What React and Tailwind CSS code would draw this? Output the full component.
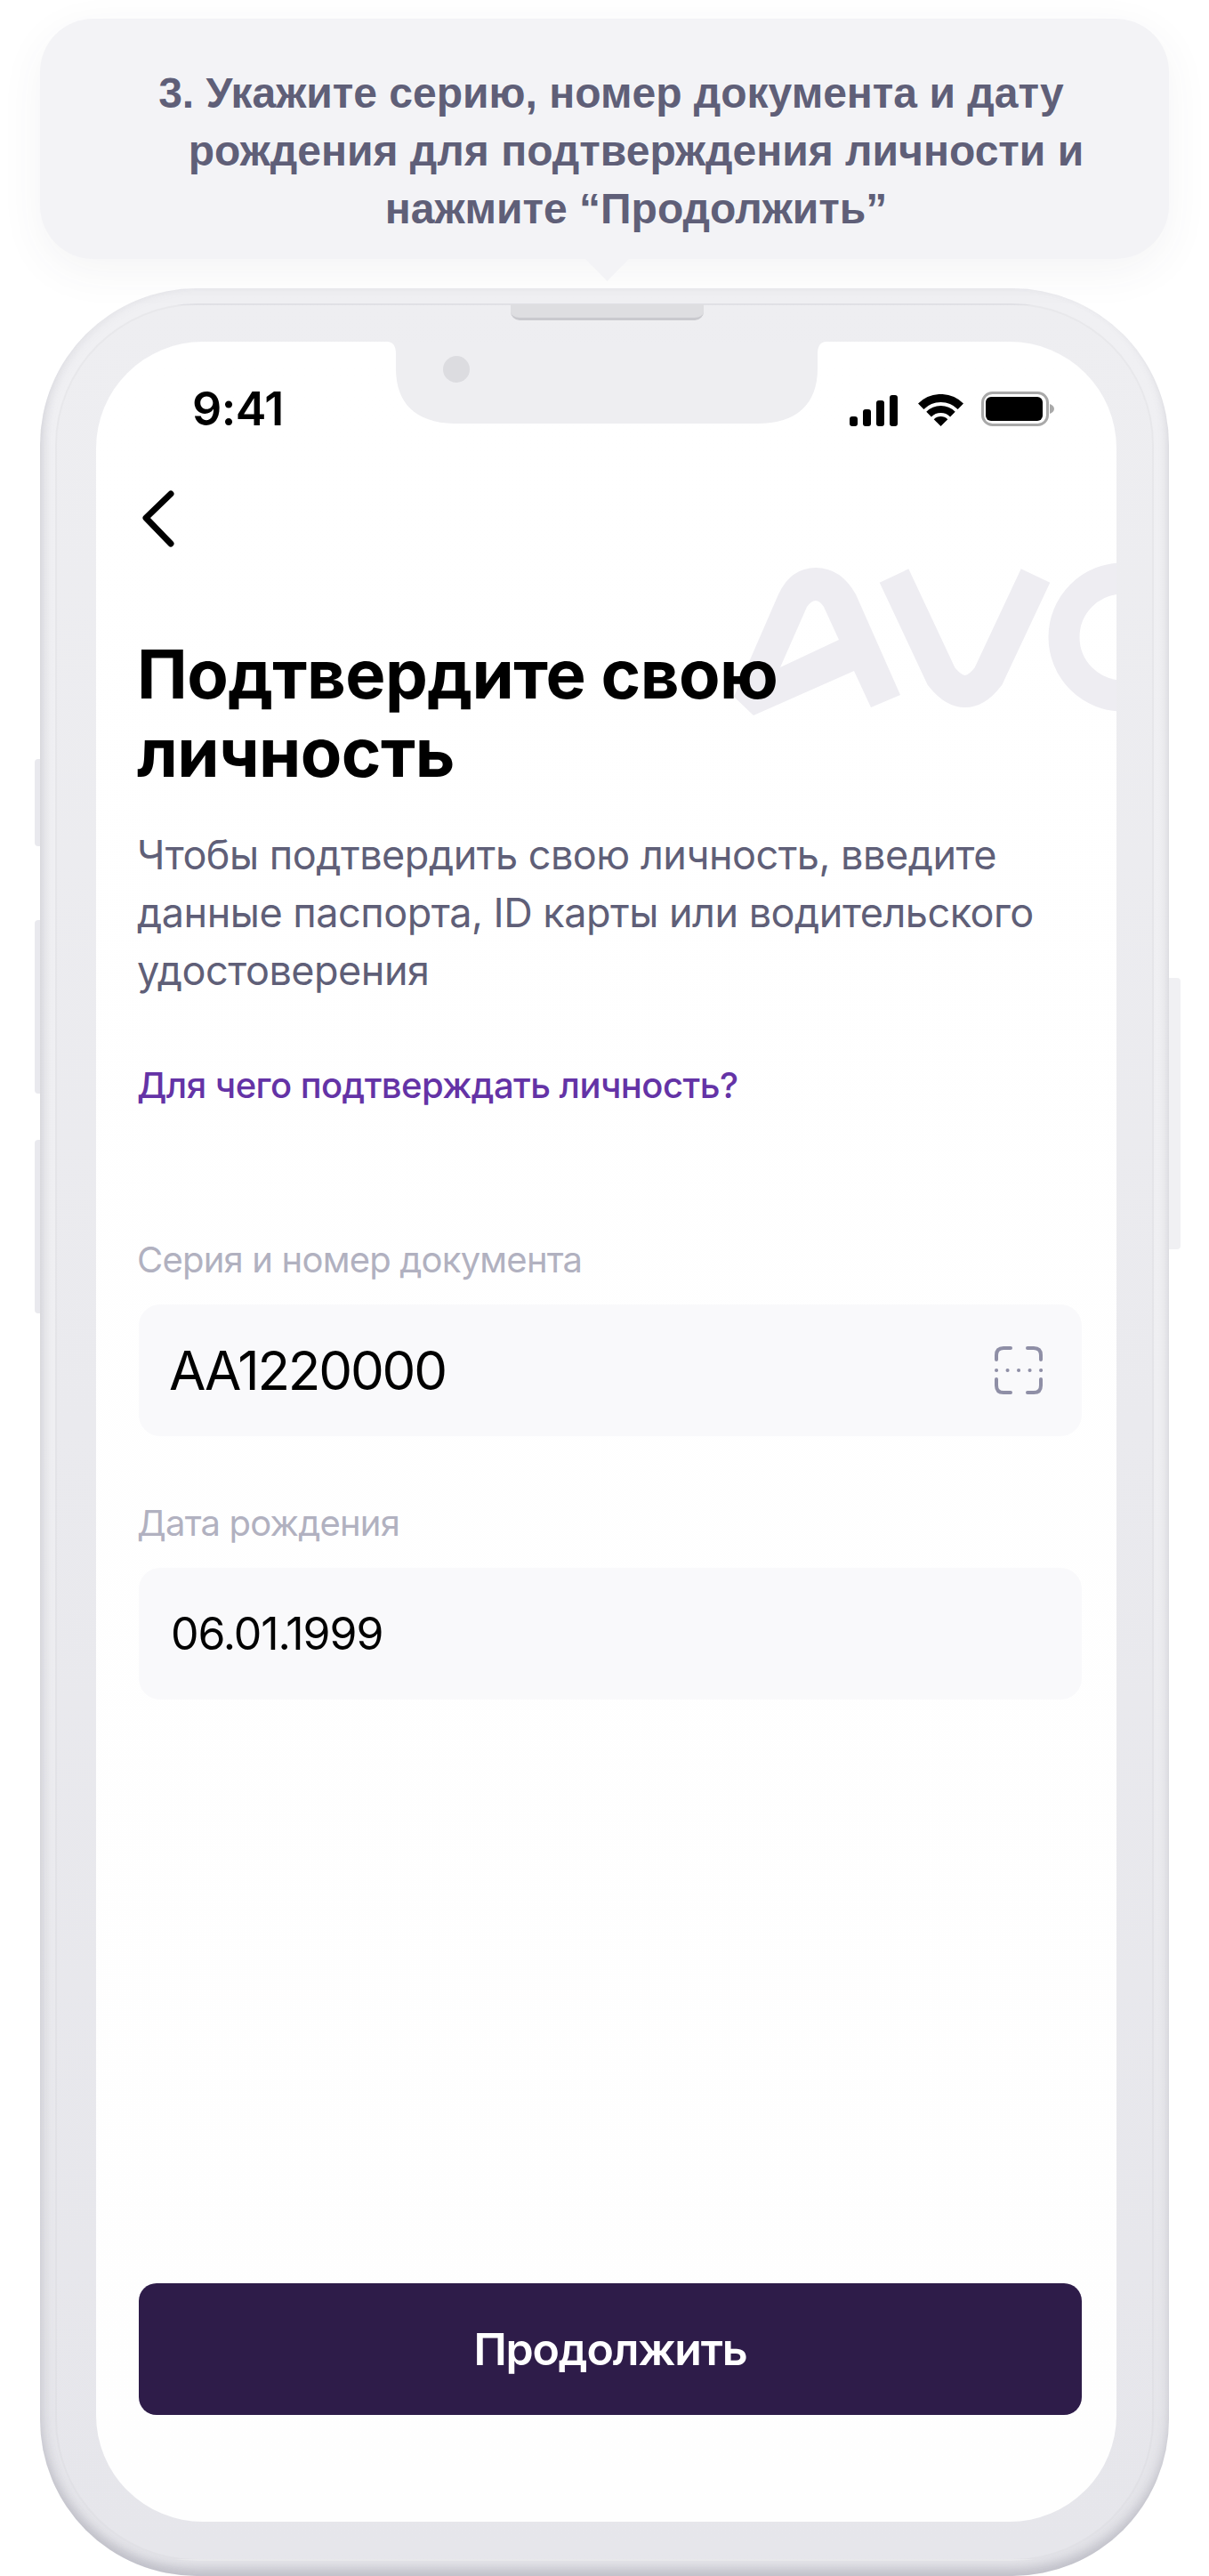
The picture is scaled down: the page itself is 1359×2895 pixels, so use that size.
const inter = "font-['Inter',sans-serif]"

function SignalIcon() {
  return (
    <svg width="54" height="35" viewBox="0 0 54 35" fill="#000">
      <rect x="0" y="24" width="9" height="11" rx="3" />
      <rect x="15" y="16" width="9" height="19" rx="3" />
      <rect x="30" y="6" width="9" height="29" rx="3" />
      <rect x="45" y="0" width="9" height="35" rx="3" />
    </svg>
  )
}

function WifiIcon() {
  return (
    <svg width="51" height="36" viewBox="0 0 51 36" fill="none">
      <path d="M3.2 13.7A31.5 31.5 0 0 1 47.8 13.7" stroke="#000" strokeWidth="9" />
      <path d="M12.1 22.6A19 19 0 0 1 38.9 22.6" stroke="#000" strokeWidth="8" />
      <path d="M25.5 36L17.7 28.2A11 11 0 0 1 33.3 28.2Z" fill="#000" />
    </svg>
  )
}

function BatteryIcon() {
  return (
    <svg width="82" height="39" viewBox="0 0 82 39" fill="none">
      <rect x="1.5" y="1.5" width="73" height="36" rx="11" stroke="#a9a9a9" strokeWidth="3" />
      <rect x="5" y="6" width="64" height="27" rx="6" fill="#000" />
      <path d="M77 14C80 15 82 17 82 19.5C82 22 80 24 77 25Z" fill="#a9a9a9" />
    </svg>
  )
}

function ScanIcon() {
  return (
    <svg width="54" height="54" viewBox="0 0 54 54" fill="none" stroke="#8f8fa6" strokeLinecap="round">
      <path d="M2 15V10Q2 2 10 2H18" strokeWidth="4" />
      <path d="M37 2H44Q52 2 52 10V15" strokeWidth="4" />
      <path d="M2 37V44Q2 52 10 52H18" strokeWidth="4" />
      <path d="M37 52H44Q52 52 52 44V37" strokeWidth="4" />
      <path d="M2 27H2.1M14.5 27H14.6M27 27H27.1M39.5 27H39.6M52 27H52.1" strokeWidth="4" />
    </svg>
  )
}

export default function App() {
  return (
    <div className="relative w-[1359px] h-[2895px] overflow-hidden bg-white pt-[21px] pl-[45px]">
      {/* Speech bubble */}
      <div className="relative z-10 w-[1269px] h-[270px] rounded-[60px] bg-[#f3f3f6] shadow-[0_14px_50px_rgba(60,60,90,0.06)] pt-[51px] pl-[71px] text-center font-['Liberation_Sans',sans-serif] font-bold text-[48px] leading-[65px] text-[#5f5f78]">
        <p className="indent-[-56px]">
          3. Укажите серию, номер документа и дату
          <br />
          рождения для подтверждения личности и
          <br />
          нажмите “Продолжить”
        </p>
        <div className="absolute left-[613px] top-[270px] w-[49px] h-[25px] bg-[#f3f3f6] [clip-path:polygon(0_0,100%_0,50%_100%)]" />
      </div>

      {/* Phone */}
      <div className="relative mt-[33px] w-[1269px] h-[2571px] rounded-[176px] bg-gradient-to-b from-[#f0f0f3] via-[#efeff2] to-[#e4e4e9] shadow-[inset_7px_0_10px_rgba(150,150,170,0.08),inset_0_-9px_12px_rgba(120,120,135,0.3)]">
        <div className="absolute left-[-6px] top-[529px] w-[6px] h-[98px] rounded-l-[4px] bg-[#e9e9ee]" />
        <div className="absolute left-[-6px] top-[710px] w-[6px] h-[195px] rounded-l-[4px] bg-[#e9e9ee]" />
        <div className="absolute left-[-6px] top-[957px] w-[6px] h-[195px] rounded-l-[4px] bg-[#e9e9ee]" />
        <div className="absolute right-[-13px] top-[775px] w-[13px] h-[305px] rounded-r-[4px] bg-[#f0f0f3]" />

        <div className="ml-[17px] mr-[17px] pt-[17px]">
          <div className="h-[2537px] rounded-[160px] border-2 border-black/[0.025] bg-gradient-to-b from-[#eeeef1] to-[#e6e6eb] pt-[41px] pl-[44px] pr-[40px]">
            {/* Screen */}
            <div className={`relative flex flex-col h-[2450px] overflow-hidden rounded-[120px] bg-gradient-to-b from-white to-[#fefefe] ${inter}`}>
              <svg className="absolute left-[712px] top-[236px]" width="440" height="190" viewBox="820 620 440 190" fill="none">
                <path fillRule="evenodd" fill="#eeedf2" d="M1012 781L962 668Q945 638 917 638Q889 638 875 668L825 783L847 804L960 754L979 795ZM943 719L926 682Q917 668 907 682L877 750Z" />
                <path d="M1005 647L1058 760Q1085 794 1111 760L1164 647" stroke="#eeedf2" strokeWidth="36" />
                <circle cx="1262" cy="716" r="66" stroke="#eeedf2" strokeWidth="35" />
              </svg>

              <svg className="absolute left-[327px] top-0" width="494" height="92" viewBox="0 0 494 92" fill="#eeeef1">
                <path d="M0 0H494Q484 0 484 14V30C484 70 461 92 416 92H78C33 92 10 70 10 30V14Q10 0 0 0Z" />
              </svg>
              <div className="absolute left-[390px] top-[16px] w-[30px] h-[30px] rounded-full bg-[#dcdce0]" />

              <div className="relative mt-[50px] h-[52px] flex items-center">
                <span className="ml-[108px] text-[52px] leading-[52px] font-semibold tracking-[-0.5px] text-black">9:41</span>
                <div className="absolute left-[847px] top-[6px] flex items-end">
                  <SignalIcon />
                  <div className="ml-[23px]">
                    <WifiIcon />
                  </div>
                  <div className="ml-[20px]">
                    <BatteryIcon />
                  </div>
                </div>
              </div>

              <div className="relative pl-[48px] pr-[39px] flex flex-col flex-1">
                <svg className="ml-[3px] mt-[65px]" width="38" height="66" viewBox="0 0 38 66" fill="none" stroke="#000" strokeWidth="7" strokeLinecap="round" strokeLinejoin="round">
                  <path d="M33 4L5 31L33 60" />
                </svg>

                <h1 className="mt-[96px] -ml-[2px] text-[76px] leading-[88px] font-bold tracking-[-0.6px] text-black">
                  Подтвердите свою
                  <br />
                  личность
                </h1>

                <p className="mt-[39px] -ml-[2px] text-[45px] leading-[65px] tracking-[-0.5px] text-[#5f5f78]">
                  Чтобы подтвердить свою личность, введите
                  <br />
                  данные паспорта, ID карты или водительского
                  <br />
                  удостоверения
                </p>

                <p className="mt-[72px] -ml-[2px] text-[40px] leading-[50px] font-medium tracking-[-0.55px] text-[#6433a6]">Для чего подтверждать личность?</p>

                <p className="mt-[146px] -ml-[2px] text-[40px] leading-[50px] tracking-[-0.8px] text-[#b1b1c0]">Серия и номер документа</p>
                <div className="mt-[25px] h-[148px] rounded-[24px] bg-[#f9f9fb] flex items-center justify-between pl-[34px] pr-[44px]">
                  <span className="text-[60px] tracking-[-2.2px] text-black">AA1220000</span>
                  <ScanIcon />
                </div>

                <p className="mt-[73px] -ml-[2px] text-[40px] leading-[50px] tracking-[-0.8px] text-[#b1b1c0]">Дата рождения</p>
                <div className="mt-[25px] h-[148px] rounded-[24px] bg-[#f9f9fb] flex items-center pl-[36px]">
                  <span className="text-[50px] tracking-[-1.1px] text-black">06.01.1999</span>
                </div>

                <button className="mt-auto mb-[120px] h-[148px] rounded-[20px] bg-[#2e1c49] text-white text-[50px] font-semibold tracking-[-1.2px]">Продолжить</button>
              </div>
            </div>
          </div>
        </div>

        {/* Speaker */}
        <div className="absolute left-[529px] top-[18px] w-[217px] h-[18px] rounded-b-[10px] bg-[#dedee1] border-b-[3px] border-[#c9c9ce]" />
      </div>
    </div>
  )
}
